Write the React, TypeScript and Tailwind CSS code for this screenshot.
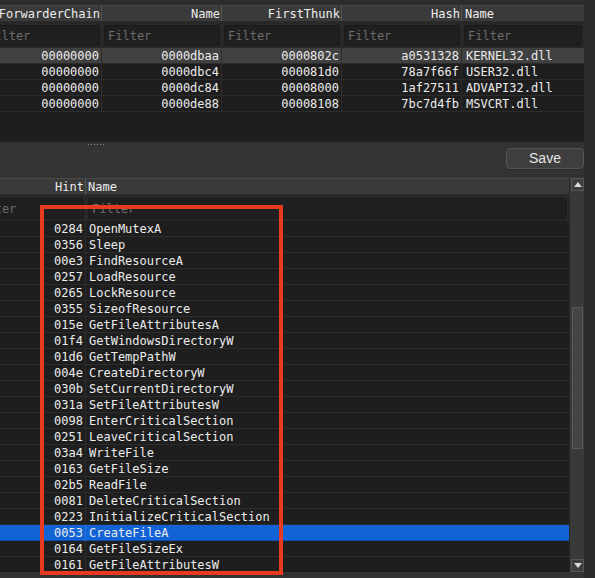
import React from "react";

const topRows = [
  ["00000000", "0000dbaa", "0000802c", "a0531328", "KERNEL32.dll"],
  ["00000000", "0000dbc4", "000081d0", "78a7f66f", "USER32.dll"],
  ["00000000", "0000dc84", "00008000", "1af27511", "ADVAPI32.dll"],
  ["00000000", "0000de88", "00008108", "7bc7d4fb", "MSVCRT.dll"],
];

const bottomRows: [string, string][] = [
  ["0284", "OpenMutexA"],
  ["0356", "Sleep"],
  ["00e3", "FindResourceA"],
  ["0257", "LoadResource"],
  ["0265", "LockResource"],
  ["0355", "SizeofResource"],
  ["015e", "GetFileAttributesA"],
  ["01f4", "GetWindowsDirectoryW"],
  ["01d6", "GetTempPathW"],
  ["004e", "CreateDirectoryW"],
  ["030b", "SetCurrentDirectoryW"],
  ["031a", "SetFileAttributesW"],
  ["0098", "EnterCriticalSection"],
  ["0251", "LeaveCriticalSection"],
  ["03a4", "WriteFile"],
  ["0163", "GetFileSize"],
  ["02b5", "ReadFile"],
  ["0081", "DeleteCriticalSection"],
  ["0223", "InitializeCriticalSection"],
  ["0053", "CreateFileA"],
  ["0164", "GetFileSizeEx"],
  ["0161", "GetFileAttributesW"],
];

function FilterBox() {
  return (
    <div className="h-[21px] rounded-[3px] bg-[#1f1f1f] border border-[#1a1a1a] flex items-center pl-[3px] pt-[1px] text-[#6c6c6c] text-[12px] leading-[15px] overflow-hidden whitespace-nowrap">
      Filter
    </div>
  );
}

function Tri({ up }: { up: boolean }) {
  return (
    <svg width="8" height="5" viewBox="0 0 8 5">
      {up ? (
        <polygon points="0,5 8,5 4,0" fill="#d8d8d8" />
      ) : (
        <polygon points="0,0 8,0 4,5" fill="#d8d8d8" />
      )}
    </svg>
  );
}

export default function App() {
  const topHead = ["ForwarderChain", "Name", "FirstThunk", "Hash", "Name"];
  return (
    <div
      className="relative w-[595px] h-[578px] bg-[#333333] flex overflow-hidden text-[#ececec]"
      style={{ fontFamily: '"DejaVu Sans Mono", monospace' }}
    >
      <div className="w-[584px] flex flex-col">
        <div className="h-[5px] bg-[#2c2c2c]" />
        {/* top table */}
        <div className="h-[137px] bg-[#1e1e1e] overflow-hidden">
          <div className="ml-[-19px] w-[603px] text-[12px]">
            <div className="grid grid-cols-[121px_120px_120px_120px_1fr] h-[17px] bg-[#3a3a3a] border-t border-[#474747] border-b border-b-[#2a2a2a]">
              {topHead.map((h, i) => (
                <div
                  key={i}
                  className={
                    "leading-[15px] pt-[1px] whitespace-nowrap overflow-hidden " +
                    (i < 4
                      ? "text-right pr-[1px] border-r border-[#555555]"
                      : "text-left pl-[3px]")
                  }
                >
                  {h}
                </div>
              ))}
            </div>
            <div className="grid grid-cols-[121px_120px_120px_120px_1fr] h-[26px] bg-[#282828] pt-[3px]">
              {topHead.map((_, i) => (
                <div key={i} className="px-[2px]">
                  <FilterBox />
                </div>
              ))}
            </div>
            {topRows.map((r, ri) => (
              <div
                key={ri}
                className={
                  "grid grid-cols-[121px_120px_120px_120px_1fr] h-[16px] border-b border-[#2c2c2c] " +
                  (ri === 0 ? "bg-[#414141]" : "bg-[#1e1e1e]")
                }
              >
                {r.map((c, i) => (
                  <div
                    key={i}
                    className={
                      "leading-[15px] pt-[1px] whitespace-nowrap overflow-hidden " +
                      (i < 4
                        ? "text-right pr-[2px] border-r border-[#2c2c2c]"
                        : "text-left pl-[4px]")
                    }
                  >
                    {c}
                  </div>
                ))}
              </div>
            ))}
          </div>
        </div>
        {/* splitter */}
        <div className="h-[36px] bg-[#333333] flex flex-col">
          <div className="h-[6px] flex items-start pt-[2px] pl-[88px] gap-[2px]">
            {[0, 1, 2, 3, 4, 5].map((d) => (
              <div key={d} className="w-[1px] h-[1px] bg-[#8a8a8a]" />
            ))}
          </div>
          <div className="flex justify-end">
            <button
              className="w-[78px] h-[21px] rounded-[4px] bg-[#3e3e3e] border border-[#555555] text-[14px] leading-[19px] text-[#e4e4e4] shadow-[0_1px_0_#2a2a2a]"
              style={{ fontFamily: '"Liberation Sans", Arial, sans-serif' }}
            >
              Save
            </button>
          </div>
        </div>
        {/* bottom table */}
        <div className="h-[394px] flex">
          <div className="w-[570px] bg-[#1e1e1e] border-r border-[#262626] overflow-hidden">
            <div className="ml-[-33px] w-[602px] text-[12px]">
              <div className="grid grid-cols-[119px_1fr] h-[17px] bg-[#3a3a3a] border-t border-[#4a4a4a] border-b border-b-[#2a2a2a]">
                <div className="leading-[15px] pt-[1px] text-right pr-[1px] border-r border-[#555555]">Hint</div>
                <div className="leading-[15px] pt-[1px] pl-[2px]">Name</div>
              </div>
              <div className="grid grid-cols-[119px_1fr] h-[26px] bg-[#282828] pt-[3px]">
                <div className="px-[2px]">
                  <FilterBox />
                </div>
                <div className="px-[2px]">
                  <FilterBox />
                </div>
              </div>
              {bottomRows.map(([h, n], ri) => (
                <div
                  key={ri}
                  className={
                    "grid grid-cols-[119px_1fr] h-[16px] border-b " +
                    (ri === 19
                      ? "bg-[#1263d6] border-[#0d4fb0]"
                      : "bg-[#1e1e1e] border-[#2c2c2c]")
                  }
                >
                  <div
                    className={
                      "leading-[15px] pt-[1px] text-right pr-[2px] border-r " +
                      (ri === 19 ? "border-[#2a74dc]" : "border-[#2c2c2c]")
                    }
                  >
                    {h}
                  </div>
                  <div className="leading-[15px] pt-[1px] pl-[3px] whitespace-nowrap">{n}</div>
                </div>
              ))}
            </div>
          </div>
          {/* scrollbar */}
          <div className="w-[14px] flex flex-col bg-[#393939]">
            <div className="h-[13px] ml-[1px] bg-[#3d3d3d] border border-[#575757] flex items-center justify-center">
              <Tri up={true} />
            </div>
            <div className="flex-1 flex flex-col">
              <div className="mt-[116px] h-[142px] ml-[2px] mr-[1px] bg-[#444444] border border-[#5a5a5a]" />
            </div>
            <div className="h-[13px] ml-[1px] bg-[#3d3d3d] border border-[#575757] flex items-center justify-center">
              <Tri up={false} />
            </div>
          </div>
        </div>
        <div className="flex-1 bg-[#333333]" />
      </div>
      <div className="w-[11px] bg-[#2b2b2b]" />
      {/* red annotation box */}
      <div className="absolute left-[40px] top-[205px] w-[243px] h-[370px] border-[4px] border-[#e63a21] pointer-events-none" />
    </div>
  );
}
